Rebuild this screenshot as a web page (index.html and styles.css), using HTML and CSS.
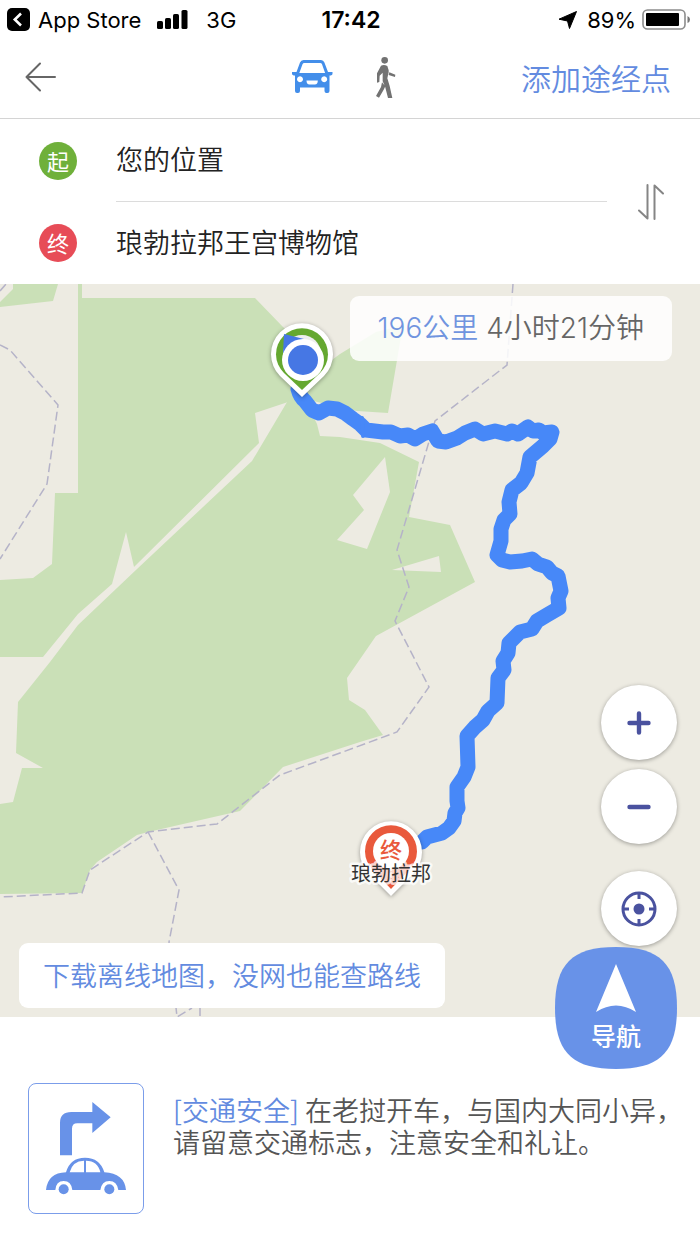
FILE: index.html
```
<!DOCTYPE html>
<html lang="zh-CN">
<head>
  <meta charset="UTF-8">
  <meta name="viewport" content="width=device-width, initial-scale=1.0">
  <title>路线规划</title>
  <link rel="stylesheet" href="styles.css">
</head>
<body>
  <div class="status-bar">
    <div class="status-left">
      <svg width="23" height="23" viewBox="0 0 23 23">
        <rect width="23" height="23" rx="5" fill="#000"/>
        <path d="M14 5.5 7.8 11.5 14 17.5" fill="none" stroke="#fff" stroke-width="2.6"/>
      </svg>
      <span>App Store</span>
      <svg class="signal" width="31" height="19" viewBox="0 0 31 19">
        <rect x="0" y="11" width="6" height="8" rx="1.6"/>
        <rect x="8" y="8" width="6" height="11" rx="1.6"/>
        <rect x="16" y="4" width="6" height="15" rx="1.6"/>
        <rect x="24.5" y="0" width="6" height="19" rx="1.6"/>
      </svg>
      <span>3G</span>
    </div>
    <div class="status-time">17:42</div>
    <div class="status-right">
      <svg width="18" height="18" viewBox="0 0 18 18"><path d="M17.5.5 10.5 17.5 8.5 10 0 8.2z" stroke="#000" stroke-linejoin="round"/></svg>
      <span>89%</span>
      <svg class="battery" width="49" height="21" viewBox="0 0 49 21">
        <rect x="1" y="1" width="42" height="19" rx="4.5" fill="none" stroke="#8c8c8c" stroke-width="1.6"/>
        <rect x="4" y="4" width="33" height="13" rx="1"/>
        <path d="M45.5 7q2.5 1 2.5 3.500t-2.500 3.500z" fill="#777"/>
      </svg>
    </div>
  </div>

  <header class="toolbar">
    <button class="icon-btn back" aria-label="返回">
      <svg width="32" height="30" viewBox="0 0 32 30" fill="none" stroke="#666" stroke-width="2" stroke-linecap="round" stroke-linejoin="round">
        <path d="M30 15H1.500M15 1.500 1.500 15 15 28.500"/>
      </svg>
    </button>
    <div class="modes">
      <button class="icon-btn" aria-label="驾车">
        <svg width="42" height="36" viewBox="0 0 42 36" fill="#438eea">
          <path fill-rule="evenodd" d="M12.500 1h17.500q2.500 0 3.400 2.500L37 13h4.500v1.500q0 2-3 2V32q0 2-2 2h-1q-2 0-2-2v-3.500H9V32q0 2-2 2H6q-2 0-2-2V16.500q-3 0-3-2V13h4.500L9 3.500Q10 1 12.500 1zM13.300 4q-1.300 0-1.800 1.300L8.300 14h25.800L31 5.300Q30.500 4 29.200 4zM9 17.300a3 3 0 1 0 .01 0zM33.200 17.300a3 3 0 1 0 .01 0zM15.500 21.500q0 4 3 4h5.300q3 0 3-4z"/>
        </svg>
      </button>
      <button class="icon-btn" aria-label="步行">
        <svg width="22" height="43" viewBox="0 0 66 129" fill="#727272">
          <circle cx="29" cy="13" r="10"/>
          <path d="M18 29q9-5 19 1l4 13 0 6-4 18 7 23 8 36H39l-9-35-7-15 0-26-9 9-1 19-7 2V52zM21 79l10 12-5 10-14 24-9-5 15-27zM43 49l18 7-1 7-19-6z"/>
        </svg>
      </button>
    </div>
    <a class="add-stop" href="#">添加途经点</a>
  </header>

  <form class="places">
    <div class="fields">
      <div class="place">
        <label class="dot dot-start" for="from">起</label>
        <input type="text" id="from" value="您的位置">
      </div>
      <div class="place">
        <label class="dot dot-end" for="to">终</label>
        <input type="text" id="to" value="琅勃拉邦王宫博物馆">
      </div>
    </div>
    <button type="button" class="icon-btn swap" aria-label="交换起点终点">
      <svg width="26" height="36" viewBox="0 0 26 36" fill="none" stroke="#858585" stroke-width="2" stroke-linecap="round" stroke-linejoin="round">
        <path d="M9.500 1v33.500L1 26.500M16.500 35V1.500L25 9.500"/>
      </svg>
    </button>
  </form>

  <main class="map">
    <svg class="map-canvas" viewBox="0 284 700 733" preserveAspectRatio="xMidYMid slice">
      <!-- forest -->
      <g fill="#cae0b7">
        <path d="M13 284 13 289 0 302V307L53 301 58 284z"/>
        <path d="M78 284H82V298H255L283 327 325 365 340 354 376 332 403 325 388 413 357 411 300 398 255 413 259 443 134 567 126 532 112 584 78 614 43 657H0V580L33 578 52 564 55 493H78z"/>
        <path fill-rule="evenodd" d="M290 397 252 461 137 569 78 625 50 662 18 702 16 753 43 768 22 768 13 802 0 804V894L82 893 90 870 97 862 137 835 148 832 170 827 240 811 283 767 360 742 383 735 365 710 349 700 347 678 376 636 475 582 450 525 409 517 419 462 380 443 340 437 320 436 317 424 305 400zM385 457 390 492 367 549 337 540 364 510 353 495zM392 570 439 556 441 572z"/>
      </g>
      <!-- borders -->
      <g fill="none" stroke="#b5b3c8" stroke-width="1.500" stroke-dasharray="9 4">
        <path d="M0 345 10 350 58 405 47 484 0 559"/>
        <path d="M0 291 6 284"/>
        <path d="M513 284 507 365 435 421 428 445 397 550 409 587 395 621 429 687 397 732 340 753 280 775 217 824 148 832 90 870 82 893 0 897"/>
        <path d="M148 832 179 890 169 942 177 1017 192 1008M200 1007V1017"/>
      </g>
      <!-- route -->
      <g fill="none" stroke="#4788f8" stroke-linecap="round" stroke-linejoin="round">
        <path stroke-width="15" d="M298 389Q300 397 305 401L312 410 319 413 328 408 337 409 345 413 353 419 360 424 366 430 383 432 391 432 400 436 408 435 415 439 423 434 432 431 438 441 446 442 457 438 465 433 475 429 483 434 495 431 507 434 512 431 518 434 528 427 533 431 539 430 543 433 552 432 550 439 543 446 530 457 527 473 521 483 512 490 509 502 510 514 504 520 501 529 501 541 497 555 502 560 510 562 522 561 532 559 538 564 547 567 552 573 558 576 561 591 558 598 559 608 547 615 537 621 532 629 520 632 509 643 508 653 503 661 504 670 498 678 497 703 488 711 483 720 475 727 467 736 468 767 464 777 457 787 457 801 458 808 455 813 454 821 449 828 442 833 427 837 422 842"/>
        <path stroke-width="4" d="M362 418 363 436"/>
      </g>
      <!-- start pin -->
      <g class="pin">
        <path d="M302 397 280 376A31 31 0 1 1 324 376z" fill="#fff"/>
      </g>
      <path d="M302 390 284 373A26 26 0 1 1 320 373z" fill="#65a830"/>
      <circle cx="302" cy="354" r="19" fill="#eee"/>
      <path d="M284 334 304 339 289 354 283 353z" fill="#4677e4"/>
      <circle cx="303" cy="360" r="21" fill="#fff"/>
      <circle cx="303" cy="360" r="15" fill="#4677e4"/>
      <!-- destination pin -->
      <g class="pin">
        <path d="M391 896 369 874A31 31 0 1 1 413 874z" fill="#fff"/>
      </g>
      <path d="M391 889 373 870A26 26 0 1 1 409 870z" fill="#e9593c"/>
      <circle cx="391" cy="851" r="18" fill="#fff"/>
      <text class="pin-text" x="391" y="858">终</text>
      <text class="city" x="391" y="881">琅勃拉邦</text>
    </svg>

    <div class="summary"><span class="distance">196公里</span> 4小时21分钟</div>

    <button class="offline">下载离线地图，没网也能查路线</button>

    <div class="controls">
      <button class="round" aria-label="放大">
        <svg width="24" height="24" viewBox="0 0 24 24" stroke="#4a529f" stroke-width="4.400" stroke-linecap="round"><path d="M2.500 12h19M12 2.500v19"/></svg>
      </button>
      <button class="round" aria-label="缩小">
        <svg width="24" height="24" viewBox="0 0 24 24" stroke="#4a529f" stroke-width="4.400" stroke-linecap="round"><path d="M2.500 12h19"/></svg>
      </button>
      <button class="round locate" aria-label="定位">
        <svg width="36" height="36" viewBox="0 0 36 36" fill="none" stroke="#4a529f" stroke-width="3">
          <circle cx="18" cy="18" r="16"/>
          <circle cx="18" cy="18" r="5.500" fill="#4a529f" stroke="none"/>
          <path d="M18 2v6M18 28v6M2 18h6M28 18h6"/>
        </svg>
      </button>
      <button class="navigate">
        <svg class="navigate-bg" viewBox="0 0 122 122"><path d="M61 0C105 0 122 17 122 61S105 122 61 122 0 105 0 61 17 0 61 0z" fill="#6892e8"/></svg>
        <svg class="arrow" width="40" height="48" viewBox="0 0 40 48"><path d="M20 0 40 48Q20 35 0 48z" fill="#fff"/></svg>
        <span>导航</span>
      </button>
    </div>
  </main>

  <section class="tip">
    <div class="tip-icon">
      <svg width="80" height="94" viewBox="0 0 240 282" fill="#6892e8">
        <path d="M42 160V62Q42 30 76 30H139V0L194 46 139 93V64H94Q78 64 78 80V160z"/>
        <path fill-rule="evenodd" d="M0 264Q5 213 60 211 72 167 117 167T175 211Q235 214 240 264H217Q213 237 190 237T163 264H79Q76 237 53 237T28 264zM71 211H114V176Q79 177 71 211zM120 211H163Q156 177 120 176z"/>
        <circle cx="53" cy="262" r="15"/>
        <circle cx="190" cy="262" r="15"/>
      </svg>
    </div>
    <p><a href="#">[交通安全]</a> 在老挝开车，与国内大同小异，请留意交通标志，注意安全和礼让。</p>
  </section>
</body>
</html>
```
FILE: styles.css
```
* {
  box-sizing: border-box;
}
body {
  margin: 0;
  min-height: 100vh;
  display: flex;
  flex-direction: column;
  background: #fff;
  color: #222;
  font-family: "Noto Sans CJK SC", sans-serif;
  font-size: 27px;
  font-weight: 350;
}
button, input {
  font: inherit;
  border: none;
  background: none;
  padding: 0;
}
button {
  cursor: pointer;
}
a {
  color: #638be0;
  text-decoration: none;
}
svg {
  display: block;
}
.status-bar {
  display: grid;
  grid-template-columns: 1fr auto 1fr;
  align-items: center;
  height: 39px;
  padding: 0 9px 0 7px;
  color: #000;
  font-family: Inter, sans-serif;
  font-size: 22px;
  font-weight: 400;
}
.status-left, .status-right {
  display: flex;
  align-items: center;
  gap: 8px;
}
.status-right {
  justify-content: flex-end;
  gap: 6px;
}
.status-time {
  padding-left: 4px;
  font-size: 23px;
  font-weight: 600;
}
.signal {
  margin: 0 10px 0 8px;
}
.status-right span {
  margin-left: 4px;
}
.toolbar {
  display: grid;
  grid-template-columns: 1fr auto 1fr;
  align-items: center;
  height: 80px;
  padding: 0 29px 3px 25px;
  border-bottom: 1px solid #d4d4d4;
}
.icon-btn {
  display: flex;
  align-items: center;
  justify-content: center;
}
.back {
  justify-self: start;
}
.modes {
  display: flex;
  gap: 32px;
  padding-left: 2px;
}
.modes .icon-btn {
  width: 42px;
}
.add-stop {
  justify-self: end;
  font-size: 30px;
}
.places {
  display: flex;
  align-items: center;
  padding: 0 36px 0 39px;
}
.fields {
  flex: 1;
}
.place {
  display: flex;
  align-items: center;
  gap: 39px;
}
.place input {
  flex: 1;
  min-width: 0;
  height: 82px;
  padding-bottom: 3px;
  color: #222;
}
.place:first-child input {
  height: 83px;
  border-bottom: 1px solid #dcdcdc;
}
.dot {
  width: 38px;
  height: 38px;
  border-radius: 50%;
  color: #fff;
  font-size: 22px;
  font-weight: 400;
  line-height: 36px;
  text-align: center;
}
.dot-start {
  background: #6fb03a;
}
.dot-end {
  background: #e74c57;
}
.swap {
  margin-left: 31px;
}
.map {
  position: relative;
  flex: 1;
  min-height: 640px;
  background: #edebe2;
}
.map-canvas {
  position: absolute;
  width: 100%;
  height: 100%;
}
.pin {
  filter: drop-shadow(0 1px 2px rgba(0, 0, 0, 0.35));
}
.pin-text {
  fill: #e9593c;
  font-size: 22px;
  font-weight: 500;
  text-anchor: middle;
}
.city {
  fill: #333;
  stroke: rgba(255, 255, 255, 0.75);
  stroke-width: 5px;
  stroke-linejoin: round;
  paint-order: stroke;
  font-size: 20px;
  font-weight: 400;
  text-anchor: middle;
}
.summary {
  position: absolute;
  top: 12px;
  right: 28px;
  padding: 0 28px;
  border-radius: 9px;
  background: rgba(255, 255, 255, 0.85);
  color: #666;
  font-family: Inter, "Noto Sans CJK SC", sans-serif;
  font-size: 28px;
  line-height: 65px;
}
.distance {
  color: #7094df;
}
.offline {
  position: absolute;
  left: 19px;
  bottom: 9px;
  padding: 0 24px 2px;
  border-radius: 9px;
  background: #fff;
  color: #638be0;
  line-height: 63px;
}
.controls {
  position: absolute;
  right: 23px;
  bottom: -52px;
  display: flex;
  flex-direction: column;
  align-items: flex-end;
  gap: 9px;
}
.round {
  display: flex;
  align-items: center;
  justify-content: center;
  width: 76px;
  height: 75px;
  border-radius: 50%;
  background: #fff;
  box-shadow: 0 1px 4px rgba(0, 0, 0, 0.35);
}
.locate {
  margin: 18px 0 -8px;
}
.navigate {
  position: relative;
  display: flex;
  flex-direction: column;
  align-items: center;
  width: 122px;
  height: 122px;
  padding-top: 17px;
  color: #fff;
  font-size: 25px;
  font-weight: 500;
  line-height: 46px;
}
.navigate-bg {
  position: absolute;
  inset: 0;
}
.arrow, .navigate span {
  position: relative;
}
.tip {
  display: flex;
  align-items: flex-start;
  gap: 29px;
  padding: 66px 8px 31px 28px;
  color: #555;
}
.tip-icon {
  flex: none;
  padding: 18px 17px 17px;
  border: 1px solid #7b9dea;
  border-radius: 8px;
}
.tip p {
  margin: 11px 0 0;
  line-height: 32px;
}
```
